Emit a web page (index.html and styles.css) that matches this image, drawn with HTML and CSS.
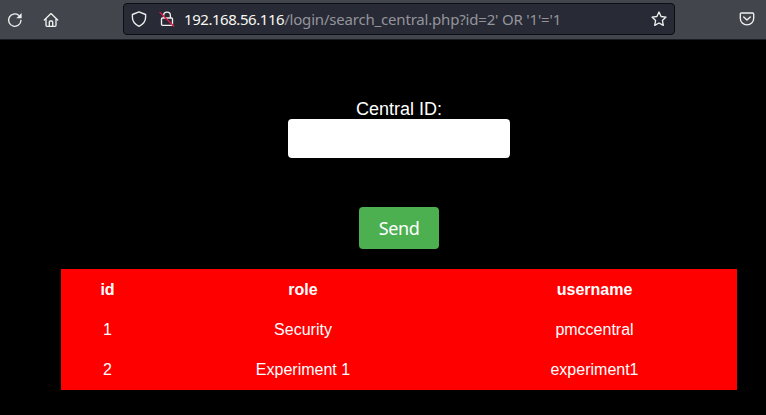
FILE: index.html
```
<!DOCTYPE html>
<html lang="en">
<head>
<meta charset="utf-8">
<title>Central search</title>
<link rel="stylesheet" href="styles.css">
</head>
<body>
<header class="toolbar">
  <svg class="icon reload" viewBox="0 0 16 16"><path d="M14 8.3A6.2 6.2 0 1 1 11.6 3.2"/><path class="solid" d="M14.6 1v5.3H9.3z"/></svg>
  <svg class="icon home" viewBox="0 0 16 16"><path d="M1.3 8 8 1.6 14.7 8M3 6.8v6.4q0 1.1 1.1 1.1h7.8q1.1 0 1.1-1.1V6.8M6.3 14V10q0-1 1-1h1.4q1 0 1 1v4"/></svg>
  <div class="address">
    <svg class="icon shield" viewBox="0 0 16 16"><path d="M8 .9 14.6 3.5v2.8C14.6 10 12.2 13.3 8 15.3 3.8 13.3 1.4 10 1.4 6.3V3.5z"/></svg>
    <svg class="icon lock" viewBox="0 0 16 16"><path d="M4.6 7V4.5a3.4 3.4 0 0 1 6.8 0V7M3.5 7h9q1 0 1 1v5.3q0 1-1 1h-9q-1 0-1-1V8q0-1 1-1z"/><path class="strike" d="M1 1.5 14.7 15"/></svg>
    <div class="url"><span class="host">192.168.56.116</span><span class="path">/login/search_central.php?id=2' OR '1'='1</span></div>
    <svg class="icon star" viewBox="0 0 16 16"><path d="m8 1 2.1 4.5 4.9.6-3.6 3.4.9 4.9L8 12l-4.3 2.4.9-4.9L1 6.1l4.9-.6z"/></svg>
  </div>
  <svg class="icon pocket" viewBox="0 0 16 16"><path d="M2.5 2h11q1.2 0 1.2 1.2v4a6.7 6.7 0 0 1-13.4 0v-4Q1.3 2 2.5 2zM4.7 6 8 9.1 11.3 6"/></svg>
</header>
<main>
  <form class="search">
    <label for="central">Central ID:</label>
    <input id="central" type="text">
    <button type="button">Send</button>
  </form>
  <table>
    <colgroup><col class="c-id"><col class="c-role"><col class="c-user"></colgroup>
    <tr><th>id</th><th>role</th><th>username</th></tr>
    <tr><td>1</td><td>Security</td><td>pmccentral</td></tr>
    <tr><td>2</td><td>Experiment 1</td><td>experiment1</td></tr>
  </table>
</main>
</body>
</html>
```
FILE: styles.css
```
* { box-sizing: border-box; }
body {
  margin: 0;
  height: 415px;
  overflow: hidden;
  background: #000;
  color: #fff;
  font-family: "Liberation Sans", Arial, sans-serif;
}
.toolbar {
  display: flex;
  align-items: center;
  height: 40px;
  padding: 0 11px 2px 7px;
  background: #42454c;
  border-bottom: 1px solid #1c1d22;
}
.icon {
  flex: none;
  width: 16px;
  height: 16px;
  fill: none;
  stroke: #f0f0f0;
  stroke-width: 1.35;
  stroke-linejoin: round;
  stroke-linecap: round;
}
.icon .solid { fill: #f0f0f0; stroke: none; }
.icon .strike { stroke: #e2194b; }
.reload { margin-top: 2px; }
.home { margin: 2px 0 0 20px; }
.address {
  display: flex;
  align-items: center;
  width: 552px;
  height: 32px;
  margin-left: 64px;
  padding: 0 7px;
  background: #282a36;
  border: 1px solid #0c0d12;
  border-radius: 4px;
}
.lock { margin-left: 12px; }
.url {
  flex: 1;
  margin-left: 9px;
  font: 15px/20px "Noto Sans", sans-serif;
  white-space: pre;
}
.host { color: #f8f8f2; letter-spacing: -0.45px; }
.path { color: #94959b; letter-spacing: -0.19px; }
.pocket { margin-left: auto; }
.search {
  display: flex;
  flex-direction: column;
  align-items: center;
  width: 676px;
  margin: 59px 0 0 61px;
}
label { font-size: 18px; line-height: 20px; }
input {
  width: 222px;
  height: 39px;
  padding: 8px;
  background: #fff;
  border: 0;
  border-radius: 4px;
}
button {
  width: 80px;
  height: 42px;
  margin-top: 49px;
  padding: 0;
  color: #fff;
  background: #4caf50;
  border: 0;
  border-radius: 4px;
  font: 18px/24px "Noto Sans", sans-serif;
  letter-spacing: -0.4px;
}
table {
  width: 676px;
  height: 121px;
  margin: 20px 0 0 61px;
  border-collapse: collapse;
  table-layout: fixed;
  background: #f00;
  font-size: 16px;
  text-align: center;
}
th, td { padding: 2px 0 0; height: 40px; }
tr:last-child td { padding-top: 0; }
.c-id { width: 93px; }
.c-role { width: 298px; }
.c-user { width: 285px; }
```
